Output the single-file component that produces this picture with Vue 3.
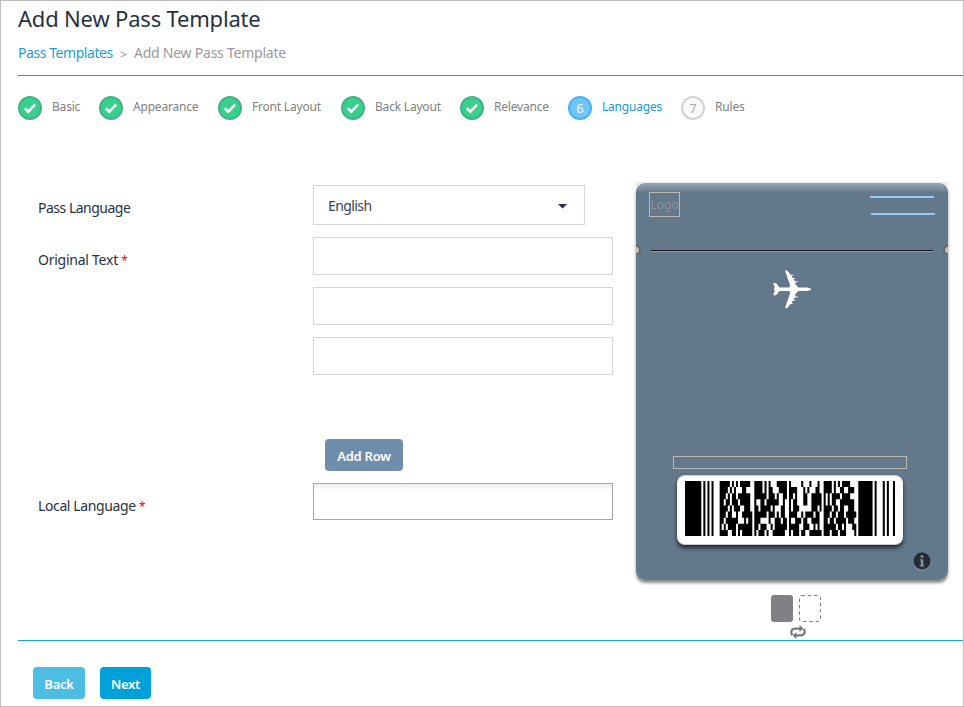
<script setup>
const steps = [
  { label: 'Basic', state: 'done', w: 81 },
  { label: 'Appearance', state: 'done', w: 119 },
  { label: 'Front Layout', state: 'done', w: 123 },
  { label: 'Back Layout', state: 'done', w: 119 },
  { label: 'Relevance', state: 'done', w: 108 },
  { label: 'Languages', state: 'active', w: 113 },
  { label: 'Rules', state: 'todo', w: 80 },
]

// Stacked barcode: alternating bar/space widths, in modules
const START = '81111113'
const STOP = '711311121'
const rows = [
  ['51111152', '41111351', '15131312', '41111144'],
  ['41111324', '41112341', '43111322', '41122232'],
  ['31112162', '61311221', '21132251', '11114144'],
  ['21213152', '12216212', '11232251', '11112272'],
  ['41113232', '21511322', '11363111', '41212232'],
  ['31221251', '61311122', '42114122', '31213151'],
  ['21631121', '34123121', '12312242', '21215132'],
  ['11114171', '21321161', '52321112', '61211321'],
  ['42211151', '11311262', '11312261', '31313411'],
]
const barcode = rows
  .map((words, r) => {
    let x = 0
    let d = ''
    const seq = START + words.join('') + STOP
    for (let i = 0; i < seq.length; i++) {
      const n = Number(seq[i])
      if (i % 2 === 0) d += `M${x} ${r}h${n}v1h${-n}z`
      x += n
    }
    return d
  })
  .join('')
</script>

<template>
  <div class="page">
    <header class="head">
      <h1>Add New Pass Template</h1>
      <nav class="crumbs">
        <a class="c1">Pass Templates</a><span class="sep">&gt;</span><span class="c2">Add New Pass Template</span>
      </nav>
    </header>

    <ol class="steps">
      <li v-for="(s, i) in steps" :key="s.label" :class="s.state" :style="{ width: s.w + 'px' }">
        <span class="dot">
          <svg v-if="s.state === 'done'" width="24" height="24" viewBox="0 0 24 24">
            <path d="M6.800 12.200l3.500 3.400 6.900-7" fill="none" stroke="#fff" stroke-width="2.700" />
          </svg>
          <template v-else>{{ i + 1 }}</template>
        </span>
        <span class="name">{{ s.label }}</span>
      </li>
    </ol>

    <main class="body">
      <form class="form" @submit.prevent>
        <div class="row first">
          <label class="l1">Pass Language</label>
          <div class="select">
            <span>English</span>
            <svg width="9" height="5" viewBox="0 0 9 5"><path d="M0 0h9L4.500 4.500z" fill="#26323d" /></svg>
          </div>
        </div>
        <div class="row">
          <label class="l2">Original Text <b>*</b></label>
          <div class="inputs">
            <div class="input"></div>
            <div class="input"></div>
            <div class="input"></div>
            <button class="btn add">Add Row</button>
          </div>
        </div>
        <div class="row local">
          <label class="l3">Local Language <b>*</b></label>
          <div class="input inset"></div>
        </div>
      </form>

      <aside class="preview">
        <div class="pass">
          <div class="top">
            <div class="logo"><span>Logo</span></div>
            <div class="lines"><i></i><i></i></div>
          </div>
          <div class="tear"><i class="notch"></i><i class="rule"></i><i class="notch"></i></div>
          <svg class="plane" width="38" height="39" viewBox="0 0 38 39">
            <path d="M38 19.200c0 1-2.600 1.700-5.500 1.700h-7.300L21.900 25l.8 1.400h2v1h-3l-1.200 2.400h1.500v.9h-2.300l-1.300 2.400h1.200v.9h-2L14.200 38H12l5.200-15.100-.9-2H6.500L3 25.300H.3l1.700-5.200H1v-1.800h1L.3 13H3l3.500 4.500h9.800l.9-2L12 .5h2.200l3.400 4.200h3v.9h-2.200l1.300 2.400h2.300v.9h-1.500l1.200 2.300h3v1h-2l-.8 1.400 3.300 3.900h7.300c2.900 0 5.500.7 5.500 1.700z" fill="#fff" />
          </svg>
          <div class="field"></div>
          <div class="code">
            <svg width="210" height="55" viewBox="0 0 103 9" preserveAspectRatio="none"><path :d="barcode" fill="#000" /></svg>
          </div>
          <svg class="info" width="18" height="19" viewBox="0 0 18 19">
            <circle cx="9" cy="9.800" r="8.600" fill="#8292a3" />
            <circle cx="9" cy="8.900" r="8.500" fill="#222c35" />
            <path d="M7.600 3.300h2.700v2.500H7.600zM6.800 7.300h3.500v6h1v1.200H6.800v-1.200h1V8.400h-1z" fill="#8494a4" />
          </svg>
        </div>
        <div class="sides"><i class="solid"></i><svg width="22" height="27" viewBox="0 0 22 27"><rect x=".5" y=".5" width="21" height="26" rx="2" fill="none" stroke="#77787b" stroke-dasharray="3.300 3" /></svg></div>
        <svg class="flip" width="16" height="14" viewBox="0 0 16 14" fill="none" stroke="#77787b" stroke-width="2.200">
          <path d="M2.300 10.200C.3 7.200 1.500 3.700 5 3.700h5.500M13.700 3.800C15.700 6.800 14.500 10.300 11 10.300H5.500" />
          <path d="M9.500 0l4 3.500-4 3.500zM6.500 7l-4 3.500 4 3.500z" fill="#77787b" stroke="none" />
        </svg>
      </aside>
    </main>

    <footer class="foot">
      <button class="btn back">Back</button>
      <button class="btn next">Next</button>
    </footer>
    <i class="gap"></i>
  </div>
</template>

<style>
body { background: #fff; }
</style>

<style scoped>
.page {
  position: relative;
  box-sizing: border-box;
  width: 964px;
  height: 707px;
  border: 1px solid #bdbdbd;
  background: #fff;
  overflow: hidden;
  font-family: "Noto Sans", "Open Sans", sans-serif;
  color: #26323d;
  display: flex;
  flex-direction: column;
}
.gap { position: absolute; left: 6px; bottom: -1px; width: 163px; height: 1px; background: #fff; }
.head { box-sizing: border-box; height: 75px; margin-left: 17px; border-bottom: 1px solid #1a96cf; flex: none; }
h1 { margin: 0; font-size: 22px; font-weight: 400; line-height: 34px; height: 36px; letter-spacing: -0.19px; white-space: nowrap; }
.crumbs { display: flex; height: 32px; line-height: 32px; font-size: 14px; color: #999; white-space: nowrap; }
.c1 { width: 102px; color: #1b9dd9; letter-spacing: -0.44px; }
.c2 { letter-spacing: -0.24px; }
.sep { width: 14px; font-size: 12px; line-height: 35px; }
.steps { display: flex; list-style: none; margin: 20px 0 0 17px; padding: 0; height: 24px; flex: none; }
.steps li { display: flex; gap: 10px; white-space: nowrap; font-size: 12px; letter-spacing: -0.2px; color: #808080; }
.dot { box-sizing: border-box; width: 24px; height: 24px; border-radius: 50%; flex: none; text-align: center; line-height: 20px; font-size: 13px; letter-spacing: 0; border: 2px solid #45b184; background: #36d18d; }
.dot svg { display: block; margin: -2px; }
.name { line-height: 22px; }
.active .dot { background: #70c5fb; border-color: #49b1f5; color: #fff; }
.active .name { color: #1297d6; }
.todo .dot { background: #f9f9f9; border-color: #d2d2d2; color: #aaa; }
.body { display: flex; margin-left: 17px; height: 521px; border-bottom: 1px solid #1ca3d9; box-sizing: border-box; flex: none; }
.form { width: 618px; flex: none; }
.row { display: flex; }
.row.first { margin-top: 65px; height: 52px; }
label { flex: none; width: 275px; padding-left: 20px; box-sizing: border-box; line-height: 46px; font-size: 14px; letter-spacing: -0.5px; white-space: nowrap; }
.l2 { letter-spacing: -0.25px; }
.l3 { letter-spacing: -0.38px; }
label b { color: #f00; font-weight: 400; font-size: 12px; }
.row > *:last-child { margin-left: 20px; }
.select { box-sizing: border-box; width: 272px; height: 40px; border: 1px solid #d0d6dc; display: flex; align-items: center; justify-content: space-between; padding: 0 17px 0 14px; font-size: 14px; letter-spacing: -0.6px; color: #3a444e; }
.select svg { margin-top: 3px; }
.inputs { display: flex; flex-direction: column; gap: 12px; }
.input { box-sizing: border-box; width: 300px; height: 38px; border: 1px solid #d0d6dc; }
.input.inset { height: 37px; border-color: #a6a6a6; box-shadow: inset 0 6px 5px -3px #ececec; }
.btn { border: 0; border-radius: 4px; color: #fff; height: 32px; padding: 2px 0 0; font: 600 13px "Noto Sans", "Open Sans", sans-serif; letter-spacing: -0.25px; white-space: nowrap; }
.add { width: 78px; margin: 52px 0 0 12px; background: #6f8eac; }
.local { margin-top: 12px; }
.preview { width: 312px; margin-top: 62px; padding-top: 1px; display: flex; flex-direction: column; align-items: center; background: linear-gradient(#ebebeb, #ebebeb) 0 0 / 100% 9px no-repeat; }
.pass { box-sizing: border-box; width: 312px; height: 397px; flex: none; border-radius: 9px; background: linear-gradient(#9aa8b6 0, #64788c 10px); box-shadow: 0 3px 3px #8d8d8d; overflow: hidden; display: flex; flex-direction: column; }
.top { display: flex; justify-content: space-between; padding: 9px 13px 0; height: 53px; }
.logo { box-sizing: border-box; width: 31px; height: 25px; border: 1px solid #bdb9b5; color: #8f9496; font-size: 12px; letter-spacing: -0.1px; line-height: 23px; text-align: center; }
.lines { width: 65px; padding-top: 4px; display: flex; flex-direction: column; gap: 15px; }
.lines i { height: 2px; width: 64px; background: #94c9fa; }
.lines i + i { margin-left: 1px; }
.tear { display: flex; align-items: center; justify-content: space-between; height: 10px; margin: 0 -4px; }
.notch { box-sizing: border-box; width: 9px; height: 10px; border-radius: 50%; background: #c4c0bc; border: 2px solid #666463; }
.rule { width: 282px; height: 1px; background: #10161b; box-shadow: 0 1px #8b9aa9; }
.plane { margin: 15px 0 0 137px; flex: none; }
.field { box-sizing: border-box; width: 234px; height: 13px; margin: 147px 0 0 37px; border: 1px solid #bdb9b5; flex: none; }
.code { box-sizing: border-box; width: 226px; height: 70px; margin: 6px 0 0 41px; padding: 5px 8px; background: #fff; border: 1px solid #c9ccd0; border-width: 1px 0; border-radius: 8px; box-shadow: 0 3px 4px #1d2831; flex: none; }
.code svg { display: block; }
.info { margin: 7px 0 0 277px; flex: none; }
.sides { display: flex; gap: 6px; margin: 15px 0 0 8px; }
.solid { width: 22px; height: 27px; border-radius: 3px; background: #808184; }
.flip { margin: 3px 0 0 12px; }
.foot { display: flex; gap: 15px; margin: 26px 0 0 32px; }
.back { width: 52px; background: #4dbde4; }
.next { width: 51px; background: #00a1da; }
</style>
